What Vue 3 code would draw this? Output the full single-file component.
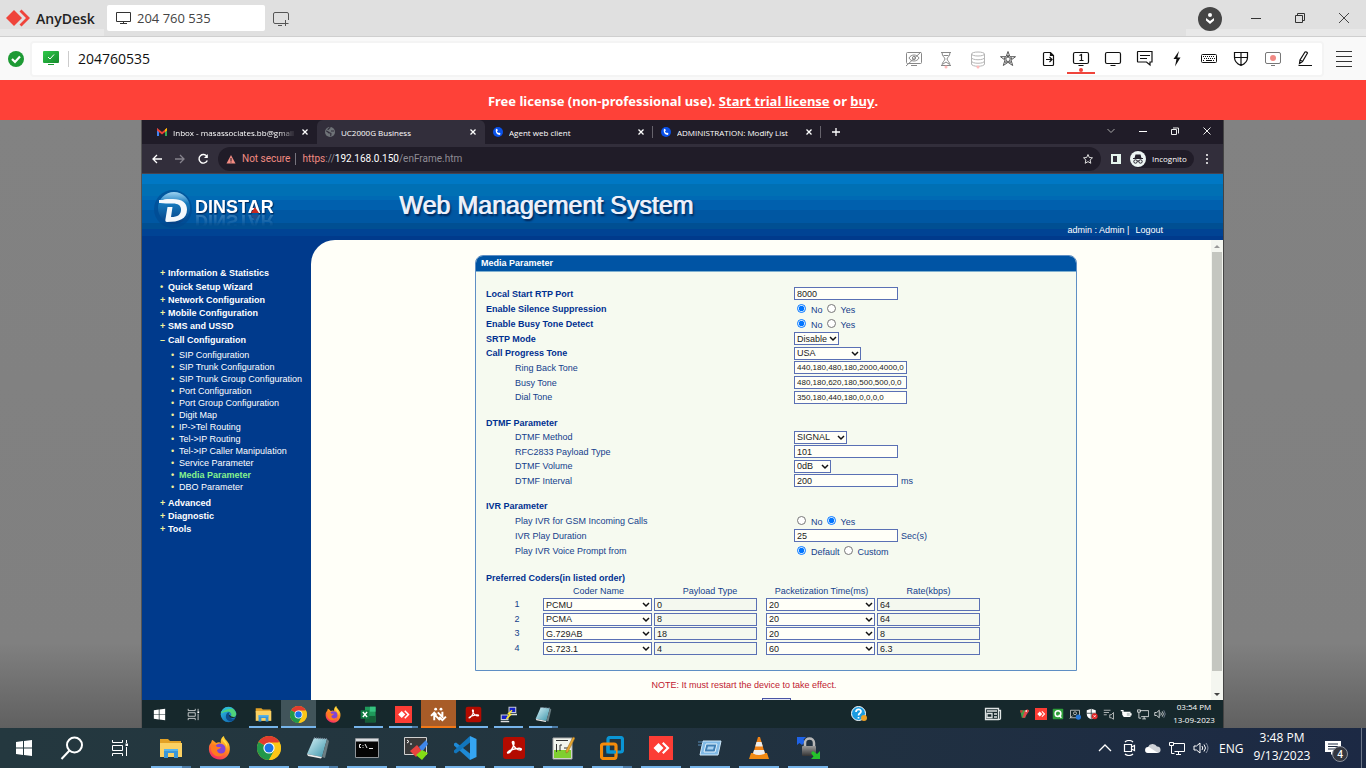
<script setup>
import { reactive } from 'vue'

const sessionTools = [
  { id: 'privacy', label: 'Privacy mode', dim: true },
  { id: 'hourglass', label: 'Waiting', dim: true },
  { id: 'stack', label: 'Storage', faint: true },
  { id: 'star', label: 'Favorites', soft: true }
]
const remoteTools = [
  { id: 'file', label: 'File transfer' },
  { id: 'monitor1', label: 'Monitor 1', active: true },
  { id: 'screen', label: 'Display' },
  { id: 'chat', label: 'Chat' },
  { id: 'bolt', label: 'Actions' },
  { id: 'keyboard', label: 'Keyboard' },
  { id: 'shield', label: 'Permissions' },
  { id: 'record', label: 'Record session' },
  { id: 'pen', label: 'Whiteboard' }
]

const tabs = [
  { id: 'gmail', title: 'Inbox - masassociates.bb@gmail' },
  { id: 'globe', title: 'UC2000G Business', active: true },
  { id: 'phone', title: 'Agent web client' },
  { id: 'phone', title: 'ADMINISTRATION: Modify List' }
]

const menu = [
  { title: 'Information & Statistics', mark: '+' },
  { title: 'Quick Setup Wizard', mark: '•' },
  { title: 'Network Configuration', mark: '+' },
  { title: 'Mobile Configuration', mark: '+' },
  { title: 'SMS and USSD', mark: '+' },
  {
    title: 'Call Configuration',
    mark: '–',
    items: [
      'SIP Configuration', 'SIP Trunk Configuration', 'SIP Trunk Group Configuration',
      'Port Configuration', 'Port Group Configuration', 'Digit Map', 'IP->Tel Routing',
      'Tel->IP Routing', 'Tel->IP Caller Manipulation', 'Service Parameter',
      'Media Parameter', 'DBO Parameter'
    ]
  },
  { title: 'Advanced', mark: '+' },
  { title: 'Diagnostic', mark: '+' },
  { title: 'Tools', mark: '+' }
]

const groups = reactive([
  {
    key: 'general',
    rows: [
      { id: 'rtp', label: 'Local Start RTP Port', type: 'text', value: '8000', main: true },
      { id: 'silence', label: 'Enable Silence Suppression', type: 'radio', value: 'No', options: ['No', 'Yes'], main: true },
      { id: 'busydetect', label: 'Enable Busy Tone Detect', type: 'radio', value: 'No', options: ['No', 'Yes'], main: true },
      { id: 'srtp', label: 'SRTP Mode', type: 'select', value: 'Disable', size: 's45', main: true },
      { id: 'cpt', label: 'Call Progress Tone', type: 'select', value: 'USA', size: 's67', main: true, tight: true },
      { id: 'ring', label: 'Ring Back Tone', type: 'text', value: '440,180,480,180,2000,4000,0,0', wide: true },
      { id: 'busy', label: 'Busy Tone', type: 'text', value: '480,180,620,180,500,500,0,0', wide: true },
      { id: 'dial', label: 'Dial Tone', type: 'text', value: '350,180,440,180,0,0,0,0', wide: true, tight: true }
    ]
  },
  {
    key: 'dtmf',
    title: 'DTMF Parameter',
    rows: [
      { id: 'method', label: 'DTMF Method', type: 'select', value: 'SIGNAL', size: 's53', tight: true },
      { id: 'rfc', label: 'RFC2833 Payload Type', type: 'text', value: '101' },
      { id: 'volume', label: 'DTMF Volume', type: 'select', value: '0dB', size: 's37', tight: true },
      { id: 'interval', label: 'DTMF Interval', type: 'text', value: '200', unit: 'ms' }
    ]
  },
  {
    key: 'ivr',
    title: 'IVR Parameter',
    rows: [
      { id: 'ivrgsm', label: 'Play IVR for GSM Incoming Calls', type: 'radio', value: 'Yes', options: ['No', 'Yes'] },
      { id: 'ivrdur', label: 'IVR Play Duration', type: 'text', value: '25', unit: 'Sec(s)' },
      { id: 'ivrvoice', label: 'Play IVR Voice Prompt from', type: 'radio', value: 'Default', options: ['Default', 'Custom'] }
    ]
  }
])

const coders = reactive([
  { name: 'PCMU', payload: '0', time: '20', rate: '64' },
  { name: 'PCMA', payload: '8', time: '20', rate: '64' },
  { name: 'G.729AB', payload: '18', time: '20', rate: '8' },
  { name: 'G.723.1', payload: '4', time: '60', rate: '6.3' }
])

const remoteApps = [
  { id: 'windows', label: 'Start', start: true },
  { id: 'taskview', label: 'Task View' },
  { id: 'edge', label: 'Edge' },
  { id: 'folder', label: 'File Explorer', open: true },
  { id: 'chrome', label: 'Chrome', open: true, current: true },
  { id: 'firefox', label: 'Firefox' },
  { id: 'excel', label: 'Excel', open: true },
  { id: 'anydesk', label: 'AnyDesk', open: true, multi: true },
  { id: 'transfer', label: 'Transfer', alert: true },
  { id: 'acrobat', label: 'Acrobat', open: true },
  { id: 'putty', label: 'PuTTY', open: true },
  { id: 'notepad', label: 'Notepad', open: true, multi: true }
]
const remoteTray = ['parrot', 'anydesk', 'qtray', 'device', 'defender', 'speech', 'battery', 'network', 'volume']

const systemApps = [
  { id: 'windows', label: 'Start' },
  { id: 'search', label: 'Search' },
  { id: 'taskview', label: 'Task View' }
]
const localApps = [
  { id: 'folder', label: 'File Explorer', multi: true },
  { id: 'firefox', label: 'Firefox' },
  { id: 'chrome', label: 'Chrome' },
  { id: 'notepad', label: 'Notepad', multi: true },
  { id: 'cmd', label: 'Command Prompt' },
  { id: 'moba', label: 'MobaXterm' },
  { id: 'vscode', label: 'VS Code' },
  { id: 'acrobat', label: 'Acrobat' },
  { id: 'notepadpp', label: 'Notepad++' },
  { id: 'vmware', label: 'VMware', multi: true },
  { id: 'anydesk', label: 'AnyDesk' },
  { id: 'run', label: 'Run' },
  { id: 'vlc', label: 'VLC' },
  { id: 'winscp', label: 'WinSCP' }
]
const localTray = ['chevup', 'meet', 'cloud', 'network', 'volume']
</script>

<template>
  <div class="desktop">
    <svg class="sprite" aria-hidden="true">
      <defs>
        <linearGradient id="gEdge" x1="0" y1="0" x2="1" y2="1">
          <stop offset="0" stop-color="#2fc0e8" /><stop offset="1" stop-color="#0c59a4" />
        </linearGradient>
        <linearGradient id="gFire" x1="0.8" y1="0" x2="0.3" y2="1">
          <stop offset="0" stop-color="#ffe03a" /><stop offset="0.5" stop-color="#ff8a1e" /><stop offset="1" stop-color="#f5256a" />
        </linearGradient>
        <linearGradient id="gNote" x1="0" y1="0" x2="1" y2="1">
          <stop offset="0" stop-color="#d6f2f8" /><stop offset="1" stop-color="#3a93a8" />
        </linearGradient>
        <linearGradient id="gLock" x1="0" y1="0" x2="0" y2="1">
          <stop offset="0" stop-color="#9a9a9a" /><stop offset="1" stop-color="#333" />
        </linearGradient>
        <linearGradient id="gBall" x1="0" y1="0" x2="0" y2="1">
          <stop offset="0" stop-color="#9fd4f2" /><stop offset="0.35" stop-color="#1579bd" /><stop offset="1" stop-color="#053f83" />
        </linearGradient>
        <linearGradient id="gOk" x1="0" y1="0" x2="1" y2="1">
          <stop offset="0" stop-color="#2fc94a" /><stop offset="1" stop-color="#158a2c" />
        </linearGradient>
      </defs>

      <symbol id="privacy" viewBox="0 0 20 20"><g fill="none" stroke="currentColor"><rect x="2.5" y="3.5" width="15" height="11" rx="1" /><path d="M7 16.5h6M2 17 17 3M5 9c2-4 8-4 10 0-2 4-8 4-10 0z" /><circle cx="10" cy="9" r="1.6" /></g></symbol>
      <symbol id="hourglass" viewBox="0 0 20 20"><g fill="none" stroke="currentColor"><path d="M5 3.500h10M5 16.500h10M6 3.500c0 4 3 5 3 6.500s-3 3-3 6.500M14 3.500c0 4-3 5-3 6.500s3 3 3 6.500M7.500 6.500h5M7 15l3-2 3 2" /></g><circle cx="10" cy="18" r="1.5" fill="#fbb" /></symbol>
      <symbol id="stack" viewBox="0 0 20 20"><g fill="none" stroke="currentColor"><ellipse cx="10" cy="5" rx="6.500" ry="2" /><path d="M3.500 5v10c0 3 13 3 13 0V5M3.500 8.500c0 3 13 3 13 0M3.500 12c0 3 13 3 13 0" /></g><circle cx="10" cy="18" r="1.500" fill="#fbb" /></symbol>
      <symbol id="star" viewBox="0 0 20 20"><path d="m10 2.500 1.900 5.200h5.600l-4.500 3.400 1.700 5.400L10 13.300l-4.700 3.200 1.700-5.400-4.500-3.400h5.600zM10 6l1 3h3l-2.500 1.800.9 2.900L10 12l-2.400 1.700.9-2.900L6 9h3z" fill="none" stroke="currentColor" /></symbol>
      <symbol id="file" viewBox="0 0 20 20"><path d="M5.500 3.500h6l3 3v9q0 1-1 1h-8q-1 0-1-1v-11q0-1 1-1zM11.500 3.500v3h3M7 10.500h6M10.500 8l2.500 2.500-2.500 2.500" fill="none" stroke="currentColor" stroke-width="1.200" /></symbol>
      <symbol id="monitor1" viewBox="0 0 20 20"><path d="M4 3.500h12q1.500 0 1.500 1.500v8q0 1.500-1.500 1.500H4q-1.500 0-1.500-1.500V5q0-1.500 1.500-1.500zM7.500 16.500h5M8.500 6.500l2-1v6M8.500 11.500h4" fill="none" stroke="currentColor" stroke-width="1.200" /></symbol>
      <symbol id="screen" viewBox="0 0 20 20"><path d="M4 3.500h12q1.500 0 1.500 1.500v8q0 1.500-1.500 1.500H4q-1.500 0-1.500-1.500V5q0-1.500 1.500-1.500zM7.500 16.500h5" fill="none" stroke="currentColor" stroke-width="1.200" /></symbol>
      <symbol id="chat" viewBox="0 0 20 20"><path d="M3 2.500h14v10.500h-2v3l-3.500-3H3q-.5 0-.5-.5V3q0-.5.500-.5zM5 6.500h10M5 9.500h7" fill="none" stroke="currentColor" stroke-width="1.200" /></symbol>
      <symbol id="bolt" viewBox="0 0 20 20"><path d="M12 2 6.500 10h3L8 17.500 13.500 8.500h-3.200z" fill="currentColor" /></symbol>
      <symbol id="keyboard" viewBox="0 0 20 20"><rect x="2.500" y="5.500" width="15" height="8" rx="1" fill="none" stroke="currentColor" /><path d="M4 7.500h12M5 9.500h11M4 11.500h2M14 11.500h2" stroke="currentColor" stroke-dasharray="1 1" /><path d="M7 11.500h6" stroke="currentColor" /></symbol>
      <symbol id="shield" viewBox="0 0 20 20"><path d="M10 3.500H3.500v5c0 4 3 6.500 6.500 8 3.500-1.500 6.500-4 6.500-8v-5zM10 3.500v13M3.500 8.500h13" fill="none" stroke="currentColor" stroke-width="1.200" /></symbol>
      <symbol id="record" viewBox="0 0 20 20"><g fill="none" stroke="#777"><rect x="2.500" y="3.500" width="15" height="11" rx="1.500" /><path d="M8 16.500h4" /></g><circle cx="10" cy="9" r="3" fill="#f28a85" /></symbol>
      <symbol id="pen" viewBox="0 0 20 20"><path d="M4.500 14.500 5 11l5-8q2-.5 2.500 1l-5 8.500zM5 11l2.500 1.500M3.500 16.500h13.500" fill="none" stroke="currentColor" stroke-width="1.200" /></symbol>

      <symbol id="gmail" viewBox="0 0 12 12"><path d="M1 2v8h2V5z" fill="#4285f4" /><path d="M11 2v8H9V5z" fill="#34a853" /><path d="m1 2 5 4 5-4v2.500L6 8.500 1 4.500z" fill="#ea4335" /><path d="M9 3.500 11 2v2.500L9 6z" fill="#fbbc04" /></symbol>
      <symbol id="globe" viewBox="0 0 12 12"><circle cx="6" cy="6" r="5" fill="#6f7378" /><path d="M2 5c2 0 2 2 4 2s0 2 1 3M6 1c0 2-2 1-2 3M7 5h3" stroke="#322e3b" fill="none" stroke-width="1.200" /></symbol>
      <symbol id="phone" viewBox="0 0 12 12"><circle cx="6" cy="6" r="5" fill="#0a52ea" /><path d="M4 3c-1 3 1 6 4 6l.500-1.500-1.500-1-.700.500C5.500 6.500 5 5.500 5 5l1-.500L5 2.800z" fill="#fff" /></symbol>

      <symbol id="windows" viewBox="0 0 24 24"><path d="M4 6l7-1v6.500H4zM12 4.900 20 4v7.500h-8zM4 12.500h7V19l-7-1zM12 12.500h8V20l-8-.9z" fill="#fff" /></symbol>
      <symbol id="search" viewBox="0 0 24 24"><g fill="none" stroke="#fff" stroke-width="2"><circle cx="14.500" cy="9" r="7.500" /><path d="m9.500 14.500-8 8.500" /></g></symbol>
      <symbol id="taskview" viewBox="0 0 24 24"><g fill="none" stroke="#fff"><path d="M4.500 4v2.500h10V4M4.500 20v-2.500h10V20M4.500 9.500h10v5h-10zM18.500 4v3M18.500 11v9" /></g><path d="M17.500 7.500h2.500v2.500h-2.500z" fill="#fff" /></symbol>
      <symbol id="edge" viewBox="0 0 24 24"><circle cx="12" cy="12" r="11" fill="url(#gEdge)" /><path d="M1.500 10C4 0 20-1 23 11c0 5-5 6-8 4 3-4-1-8-5-7C5 8 2 11 1.500 10z" fill="#4fd37a" /><path d="M1.500 10C4 1 13-1 18 4 12 4 4 6 1.500 10z" fill="#2cb9d6" /><path d="M15 15c-3-1-3-5-1-6-4-1-7 4-5 9 3 5 9 4 12 0-2 1-5 1-6-3z" fill="#0d4d8c" /><path d="M12.500 12c0 4 4 6 9 4l2-3c-1 3-5 3-8 1.500z" fill="#17262b" /></symbol>
      <symbol id="folder" viewBox="0 0 24 24"><path d="M1 3h8l2 2h11v4H1z" fill="#e3a226" /><path d="M1 7h22v14H1z" fill="#fbd163" /><path d="M5 22v-9h14v9h-4v-5H9v5z" fill="#3a97d8" /><path d="M5 13h14v2H5z" fill="#58b4ea" /></symbol>
      <symbol id="chrome" viewBox="0 0 24 24"><circle cx="12" cy="12" r="12" fill="#fbc617" /><path d="M12 12 1.600 6A12 12 0 0 1 22.400 6z" fill="#e23c2e" /><path d="M12 12 1.600 6A12 12 0 0 0 12 24l5-9z" fill="#22984a" /><path d="M12 6.500h10.600A12 12 0 0 1 12 24l5-9z" fill="#fbc617" /><circle cx="12" cy="12" r="5.600" fill="#fff" /><circle cx="12" cy="12" r="4.500" fill="#1a73e8" /></symbol>
      <symbol id="firefox" viewBox="0 0 24 24"><path d="M4 4c1 0 3 2 4 3 2-1 4-1 5 0-1-3 1-6 3-7 0 3 3 4 5 8 3 8-2 15.500-9 15.500S0 18 1 11c0-2 1-3 2-4z" fill="url(#gFire)" /><circle cx="12" cy="13" r="5.500" fill="#8245d6" /><path d="M3 9c3-1 5 0 6 2h4c-1 2-3 2-4 3 0 3 4 5 8 2-2 6-12 6-14-2z" fill="#ff7a20" /><path d="M14 2c0 4 5 5 5 11 1-5-1-8-5-11z" fill="#ffe14a" /></symbol>
      <symbol id="excel" viewBox="0 0 24 24"><path d="M7 1h15v22H7z" fill="#1f9a5b" /><path d="M14 1h8v7h-8z" fill="#36c481" /><path d="M7 14h15v9H7z" fill="#155f38" /><path d="M1 6h12v12H1z" fill="#0f7a41" /><path d="m4 8.500 6 7m0-7-6 7" stroke="#fff" stroke-width="2" /></symbol>
      <symbol id="anydesk" viewBox="0 0 24 24"><path d="M0 0h24v24H0z" fill="#fc3d35" /><path d="m9.500 7 5 5-5 5-5-5zM13 7.500 14.500 6l6 6-6 6-1.500-1.500 4.500-4.500z" fill="#fff" /></symbol>
      <symbol id="transfer" viewBox="0 0 24 24"><g fill="none" stroke="#fff" stroke-width="2.800"><path d="M6 20v-8.500l8 8.500M1.500 14 6 9.500l3 3M11 9l6.500 6.500V8M13 15.500l4.500 4.500 5-5" /></g><circle cx="8" cy="4.500" r="2" fill="#fff" /><circle cx="15.500" cy="4.500" r="2" fill="#fff" /></symbol>
      <symbol id="acrobat" viewBox="0 0 24 24"><rect x="1" y="1" width="22" height="22" rx="3" fill="#b30b00" /><path d="M6 17c2 0 6-6 6-10 0-2-2-2-1.500 0 .5 4 5 7 8 7 2-1 0-2-3-1.500-4 .5-8 2-9.500 3.500-1 1 0 1 0 1z" fill="none" stroke="#fff" stroke-width="1.500" /></symbol>
      <symbol id="putty" viewBox="0 0 24 24"><path d="M12 1h11v9H12zM1 12h11v8H1z" fill="#c9ccd4" /><path d="M13.500 2.500h8v6h-8zM2.500 13.500h8v5h-8z" fill="#1420c8" /><path d="M13 11h11v2H13zM1 21h12v2H1z" fill="#ddd" /><path d="m17 6-5 5 3 1-6 6" fill="none" stroke="#ffe92e" stroke-width="2" /></symbol>
      <symbol id="notepad" viewBox="0 0 24 24"><path d="m8 2 13 1-5 18-15-3z" fill="url(#gNote)" /><path d="m21 3 2 2-4 17-3-1z" fill="#6b7d82" /><path d="m1 18 15 3-1 1.500L2 20z" fill="#eee" /><path d="m8 2 13 1" stroke="#789" stroke-width="1.500" stroke-dasharray="1 1" /></symbol>
      <symbol id="cmd" viewBox="0 0 24 24"><path d="M.5 2.500h23v19H.5z" fill="#050505" stroke="#8f9499" /><path d="M1 3h22v2.500H1z" fill="#d9dde0" /><path d="M6 8.500H4.500v3H6M8 9v.800M8 11v.800M10 8l2 4M14 12.500h4" fill="none" stroke="#eee" /></symbol>
      <symbol id="moba" viewBox="0 0 24 24"><path d="M.5 1.500h22v17H.5z" fill="#3a3a3a" stroke="#d0d0d0" /><path d="m3 4 2 1.500L3 7M6 8h2" stroke="#fff" fill="none" /><path d="m6 15 7-6 5 6-6 6z" fill="#e8423f" /><path d="m15 11 7-7 2 4-6 8z" fill="#3f86ea" /><path d="m12 19 6-5 6 3-6 7z" fill="#84dd15" /></symbol>
      <symbol id="vscode" viewBox="0 0 24 24"><path d="M17 17.500 3 6.500 1 7.500v2L17 24z" fill="#1e8ad6" /><path d="M17 6.500 3 17.500l-2-1v-2L17 0z" fill="#1276bd" /><path d="m17 0 6.500 3v18L17 24z" fill="#35a5f2" /></symbol>
      <symbol id="notepadpp" viewBox="0 0 24 24"><path d="M2 2h19v21H2z" fill="#f3f6ee" stroke="#aaa" /><path d="M3 14h17v8H3z" fill="#7fcf2f" /><path d="M5.500 8v8M9 9h2M13 12h4M9 9v6M5 4.500h12" stroke="#333" /><path d="m22 1 2 1-7 14-2 1v-2.500z" fill="#e9a832" stroke="#8b6425" stroke-width=".5" /></symbol>
      <symbol id="vmware" viewBox="0 0 24 24"><rect x="8" y="1.500" width="14.500" height="14.500" rx="2" fill="none" stroke="#0a95d4" stroke-width="3.200" /><rect x="1.500" y="8" width="14.500" height="14.500" rx="2" fill="none" stroke="#f58b0a" stroke-width="3.200" /><path d="M8 10v6h8" fill="none" stroke="#0a95d4" stroke-width="3.200" /></symbol>
      <symbol id="run" viewBox="0 0 24 24"><path d="M5 5h18l-3 14H2z" fill="#7fb9e6" stroke="#cfe8fa" /><path d="M8 8h11l-2 8H6z" fill="#3f7fb5" stroke="#e2f2fc" /><path d="M10 10.500h6l-1 3H9z" fill="#a8d2f2" /><path d="M0 6h5M0 9h4" stroke="#5a8db8" /></symbol>
      <symbol id="vlc" viewBox="0 0 24 24"><path d="M4 17h16l2 6H2z" fill="#f08a12" /><path d="M11 1h2l5 17q-6 4-12 0z" fill="#f28316" /><path d="m9.500 6 5 0 1.300 4.500H8.200zM7 14h10l1 3.500q-6 3-12 0z" fill="#eceeee" /></symbol>
      <symbol id="winscp" viewBox="0 0 24 24"><path d="M1 1h9L7.500 3.500 9 6 6 9 3.500 7 1 9z" fill="#1e62e6" /><path d="M9 11V7c0-6 9-6 9 0v4" fill="none" stroke="#b8b8b8" stroke-width="2.500" /><rect x="6" y="10" width="14" height="10" rx="1" fill="url(#gLock)" /><path d="M24 23h-9l2.500-2.500L15 17l2-2 4 3 3-3z" fill="#25c22b" /></symbol>

      <symbol id="chevup" viewBox="0 0 16 16"><path d="m2 11 6-6 6 6" fill="none" stroke="#fff" stroke-width="1.300" /></symbol>
      <symbol id="meet" viewBox="0 0 16 16"><path d="M3.500 4.500h7v7h-7zM10.500 7l3-1.500v5l-3-1.500M4 2C6 0 10 0 12 2M4 14c2 2 6 2 8 0" fill="none" stroke="#fff" stroke-width="1.200" /></symbol>
      <symbol id="cloud" viewBox="0 0 16 16"><path d="M3 13a3 3 0 0 1 0-6 5 5 0 0 1 9-.5A3.300 3.300 0 0 1 13 13z" fill="#d0d3d8" /><path d="M3 13a3 3 0 0 1 1-6l9 6z" fill="#fff" /></symbol>
      <symbol id="network" viewBox="0 0 16 16"><path d="M4.500 3.500h11v8h-10M9.500 11.500v3M7 14.500h5M.5 2.500h4v3h-4zM2.500 5.500v8h3" fill="none" stroke="#fff" /></symbol>
      <symbol id="volume" viewBox="0 0 16 16"><path d="M1 6h2.500L7 3v10l-3.500-3H1zM9 6q1.500 2 0 4M11 4.500q3 3.500 0 7" fill="none" stroke="#fff" /><path d="M13 3q4 5 0 10" fill="none" stroke="#8a93a5" /></symbol>
      <symbol id="parrot" viewBox="0 0 16 16"><path d="M3 3h7v10H5z" fill="#43a047" /><path d="M8 7c1-6 6-6 7-3l-3 4-3 5H6z" fill="#e0454a" /><path d="M3 3h3v3H3z" fill="#c33" /><path d="M10 3h2v2h-2z" fill="#fff" /></symbol>
      <symbol id="qtray" viewBox="0 0 16 16"><rect x="1" y="1" width="14" height="14" rx="1" fill="#2f9e3a" /><circle cx="8" cy="7.500" r="3.800" fill="none" stroke="#fff" stroke-width="2" /><path d="m9 9 3.500 4" stroke="#fff" stroke-width="2" /></symbol>
      <symbol id="device" viewBox="0 0 16 16"><path d="M2 3h12v10H2zM1 14l4-4" fill="none" stroke="#ddd" /><circle cx="8" cy="7" r="2" fill="none" stroke="#ddd" /><circle cx="12.500" cy="12" r="3.500" fill="#2677d9" /></symbol>
      <symbol id="defender" viewBox="0 0 16 16"><path d="M7 1 1 3v5c0 4 3 6 6 7 3-1 6-3 6-7V3z" fill="#fff" /><path d="M7 1v14M1 7h12" stroke="#1a2a2e" /><circle cx="11.500" cy="11" r="4" fill="#e02424" /><path d="m10 9.500 3 3m0-3-3 3" stroke="#fff" /></symbol>
      <symbol id="speech" viewBox="0 0 16 16"><path d="M1 3h9M1 6h7M1 9h4M9 9h2l3-3v9l-3-2H9z" fill="none" stroke="#ddd" /></symbol>
      <symbol id="battery" viewBox="0 0 16 16"><path d="M3 5h11v7H5L3 9zM14 7h1.500v3H14z" fill="#fff" /><path d="M1 3.500h3v3" stroke="#fff" fill="none" stroke-width="1.500" /><path d="M9 6.500h4v4H9z" fill="#c4cccc" /></symbol>
      <symbol id="news" viewBox="0 0 20 16"><path d="M2.500 2.500h13v11h-13zM15.500 4.500h2v8q0 1-2 1M4 5h10M4 7.500h5v4H4zM11 8h3M11 11h3" fill="none" stroke="#dfe4e4" stroke-width="1.300" /></symbol>
      <symbol id="help" viewBox="0 0 16 16"><circle cx="7.500" cy="7.500" r="7" fill="#1a9be0" stroke="#fff" /><path d="M5 6c0-3.500 5-3.500 5-.5 0 2-2.500 1.500-2.500 4M7.500 11v1.500" fill="none" stroke="#fff" stroke-width="1.700" /><circle cx="13" cy="12" r="3" fill="#eba127" /></symbol>
    </svg>

    <header class="titlebar">
      <div class="brand">
        <svg class="brand-mark" viewBox="0 0 24 18" aria-hidden="true"><path d="m8 1 8 8-8 8-8-8zM13.500 2.500 15.500.5 24 9l-8.500 8.500-2-2L20 9z" fill="#ef443b" /></svg>
        <span>AnyDesk</span>
      </div>
      <button class="session-tab">
        <svg viewBox="0 0 16 14" aria-hidden="true"><path d="M.5 1.500h14v9H.5zM7.500 10.500v2M4 12.500h7" fill="none" stroke="#333" /></svg>
        <span>204 760 535</span>
      </button>
      <button class="new-session" aria-label="New session">
        <svg viewBox="0 0 17 16" aria-hidden="true"><path d="M10 11.500H2Q.5 11.500.5 10V2Q.5.500 2 .500h12q1.500 0 1.500 1.500v6M5 13.500h4M12.500 8v6M9.500 11.500h6" fill="none" stroke="#555" /></svg>
      </button>
      <div class="window-controls">
        <svg class="avatar" viewBox="0 0 24 24" aria-hidden="true"><circle cx="12" cy="12" r="12" fill="#464646" /><circle cx="12" cy="8" r="2" fill="#fff" /><path d="m8 11 4 3 4-3v2.500L12 17l-4-3.500z" fill="#fff" /></svg>
        <button aria-label="Minimize"><svg viewBox="0 0 12 12" aria-hidden="true"><path d="M1 6.500h10" stroke="#333" /></svg></button>
        <button aria-label="Restore"><svg viewBox="0 0 12 12" aria-hidden="true"><path d="M1.500 3.500h7v7h-7zM3.500 3.500v-2h7v7h-2" fill="none" stroke="#333" /></svg></button>
        <button aria-label="Close"><svg viewBox="0 0 12 12" aria-hidden="true"><path d="m1 1 10 10M11 1 1 11" stroke="#444" /></svg></button>
      </div>
    </header>

    <div class="toolbar">
      <svg class="ok" viewBox="0 0 16 16" aria-hidden="true"><circle cx="8" cy="8" r="8" fill="#1d9a34" /><path d="m4 8 3 3 5-5.500" fill="none" stroke="#fff" stroke-width="2.200" /></svg>
      <div class="address">
        <svg class="desk-ok" viewBox="0 0 16 15" aria-hidden="true"><rect width="16" height="12" rx="1" fill="url(#gOk)" /><path d="m5 6 2 2 4-4.500" fill="none" stroke="#fff" /><path d="M5 13.500h6" stroke="#1a9a30" /></svg>
        <input class="address-input" aria-label="Remote address" value="204760535" />
        <div class="tools">
          <button v-for="t in sessionTools" :key="t.id" :aria-label="t.label" :class="{ dim: t.dim, faint: t.faint, soft: t.soft }"><svg aria-hidden="true"><use :href="'#' + t.id" /></svg></button>
        </div>
        <div class="tools remote-tools">
          <button v-for="t in remoteTools" :key="t.id" :aria-label="t.label" :class="{ active: t.active }"><svg aria-hidden="true"><use :href="'#' + t.id" /></svg></button>
        </div>
      </div>
      <button class="burger" aria-label="Menu"><svg viewBox="0 0 16 18" aria-hidden="true"><path d="M0 1.500h16M0 6.500h16M0 11.500h16M0 16.500h16" stroke="#333" /></svg></button>
    </div>

    <p class="license">Free license (non-professional use).&nbsp;<a href="#">Start trial license</a>&nbsp;or&nbsp;<a href="#">buy</a>.</p>

    <main class="stage">
      <div class="remote">
        <div class="chrome-tabs">
          <div v-for="(t, i) in tabs" :key="i" class="tab" :class="{ current: t.active, split: i > 1 }">
            <svg class="favicon" aria-hidden="true"><use :href="'#' + t.id" /></svg>
            <span class="tab-title" :class="{ fade: i === 0 }">{{ t.title }}</span>
            <button aria-label="Close tab"><svg viewBox="0 0 8 8" aria-hidden="true"><path d="m1.500 1.500 5 5m0-5-5 5" stroke="#fff" stroke-width="1.300" /></svg></button>
          </div>
          <button class="add-tab" aria-label="New tab"><svg viewBox="0 0 10 10" aria-hidden="true"><path d="M5 1v8M1 5h8" stroke="#fff" stroke-width="1.300" /></svg></button>
          <div class="chrome-controls">
            <button aria-label="Search tabs"><svg viewBox="0 0 10 10" aria-hidden="true"><path d="m1.500 3 3.500 3.500L8.500 3" fill="none" stroke="#aaa" /></svg></button>
            <button aria-label="Minimize browser"><svg viewBox="0 0 10 10" aria-hidden="true"><path d="M1 5.500h8" stroke="#fff" /></svg></button>
            <button aria-label="Restore browser"><svg viewBox="0 0 10 10" aria-hidden="true"><path d="M1.500 3.500h5v5h-5zM3 2h5.500v5.500" fill="none" stroke="#eee" /></svg></button>
            <button aria-label="Close browser"><svg viewBox="0 0 10 10" aria-hidden="true"><path d="m1.500 1.500 7 7m0-7-7 7" stroke="#eee" /></svg></button>
          </div>
        </div>

        <div class="chrome-bar">
          <button aria-label="Back"><svg viewBox="0 0 12 12" aria-hidden="true"><path d="M11 6H2M6 2 2 6l4 4" fill="none" stroke="#fff" stroke-width="1.300" /></svg></button>
          <button aria-label="Forward"><svg viewBox="0 0 12 12" aria-hidden="true"><path d="M1 6h9M6 2l4 4-4 4" fill="none" stroke="#85828c" stroke-width="1.300" /></svg></button>
          <button aria-label="Reload"><svg viewBox="0 0 12 12" aria-hidden="true"><path d="M10 3.500A4.300 4.300 0 1 0 10.300 7.500" fill="none" stroke="#fff" stroke-width="1.400" /><path d="M10.800 1v4H7z" fill="#fff" /></svg></button>
          <div class="omnibox">
            <svg class="warn" viewBox="0 0 10 10" aria-hidden="true"><path d="m5 1 4.500 8.500H.5z" fill="#f28b82" /><path d="M5 4v3M5 7.500v1" stroke="#201c28" /></svg>
            <span class="insecure">Not secure</span>
            <span class="url"><b>https</b><i>://</i><em>192.168.0.150</em><i>/enFrame.htm</i></span>
            <svg class="mark" viewBox="0 0 12 12" aria-hidden="true"><path d="m6 1.500 1.300 3 3.200.3-2.400 2.200.7 3.300L6 8.600l-2.800 1.700.7-3.300L1.500 4.800l3.200-.3z" fill="none" stroke="#ddd" /></svg>
          </div>
          <svg class="panel-icon" viewBox="0 0 10 10" aria-hidden="true"><path d="M0 0h10v10H0z" fill="#e6f5ee" /><path d="M2 2h4v6H2z" fill="#322e3b" /></svg>
          <button class="incognito">
            <svg viewBox="0 0 16 16" aria-hidden="true"><circle cx="8" cy="8" r="8" fill="#eef6f4" /><path d="m5.500 3.500 5 0 1 3.500h-7zM3 7h10v1H3z" fill="#26232e" /><g fill="none" stroke="#26232e"><circle cx="5.500" cy="10.500" r="1.700" /><circle cx="10.500" cy="10.500" r="1.700" /><path d="M7 10h2" /></g></svg>
            <span>Incognito</span>
          </button>
          <button class="dots" aria-label="Browser menu"><svg viewBox="0 0 12 12" aria-hidden="true"><g fill="#fff"><circle cx="6" cy="2" r="1" /><circle cx="6" cy="6" r="1" /><circle cx="6" cy="10" r="1" /></g></svg></button>
        </div>

        <div class="site-head">
          <div class="logo">
            <svg viewBox="0 0 40 42" aria-hidden="true"><circle cx="20" cy="21" r="19" fill="#00458c" opacity=".55" /><circle cx="21" cy="20" r="16" fill="url(#gBall)" /><path d="M7 15q2-4 7-4h6c9 0 14 4 14 10.500C34 31 26 34 14 34c-1.500 0-2-1-1.500-3l2-12h5L18 29c7 0 10-2.500 10-7.500 0-4-3-6-8-6h-7z" fill="#f4f8fc" /><path d="M6 12h5v3H6z" fill="#f4f8fc" /></svg>
            <span class="logo-name">DINST<span class="logo-a">A</span>R</span>
          </div>
          <h1>Web Management System</h1>
          <p class="account">admin : Admin |<a href="#">Logout</a></p>
        </div>

        <div class="site-body">
          <nav class="side">
            <ul>
              <li v-for="m in menu" :key="m.title">
                <a href="#"><i>{{ m.mark }}</i>{{ m.title }}</a>
                <ul v-if="m.items">
                  <li v-for="s in m.items" :key="s"><a href="#" :class="{ here: s === 'Media Parameter' }"><i>•</i>{{ s }}</a></li>
                </ul>
              </li>
            </ul>
          </nav>

          <div class="page">
            <form class="content" @submit.prevent>
              <div class="panel">
                <h2>Media Parameter</h2>
                <div class="panel-body">
                  <section v-for="g in groups" :key="g.key" :class="g.key">
                    <h3 v-if="g.title">{{ g.title }}</h3>
                    <div v-for="r in g.rows" :key="r.id" class="row" :class="{ tight: r.tight, main: r.main }">
                      <span v-if="r.type === 'radio'" :id="r.id" class="label">{{ r.label }}</span>
                      <label v-else class="label" :for="r.id">{{ r.label }}</label>
                      <div v-if="r.type === 'text'" class="control">
                        <input :id="r.id" v-model="r.value" type="text" :class="{ wide: r.wide }" /><span v-if="r.unit" class="unit">{{ r.unit }}</span>
                      </div>
                      <div v-else-if="r.type === 'select'" class="control">
                        <span class="pick" :class="r.size"><select :id="r.id"><option>{{ r.value }}</option></select><svg viewBox="0 0 8 6" aria-hidden="true"><path d="m1 1 3 3 3-3" /></svg></span>
                      </div>
                      <div v-else class="control radios" role="radiogroup" :aria-labelledby="r.id">
                        <label v-for="o in r.options" :key="o"><input v-model="r.value" type="radio" :name="r.id" :value="o" /><span>{{ o }}</span></label>
                      </div>
                    </div>
                  </section>

                  <section class="coders">
                    <h3>Preferred Coders(in listed order)</h3>
                    <table>
                      <thead>
                        <tr><th class="c-no"></th><th class="c-pick">Coder Name</th><th class="c-pay">Payload Type</th><th class="c-pick">Packetization Time(ms)</th><th class="c-rate">Rate(kbps)</th></tr>
                      </thead>
                      <tbody>
                        <tr v-for="(c, i) in coders" :key="c.name">
                          <td class="num">{{ i + 1 }}</td>
                          <td><span class="pick"><select :aria-label="'Coder ' + (i + 1)"><option>{{ c.name }}</option></select><svg viewBox="0 0 8 6" aria-hidden="true"><path d="m1 1 3 3 3-3" /></svg></span></td>
                          <td><input type="text" class="locked" readonly :value="c.payload" :aria-label="'Payload type ' + (i + 1)" /></td>
                          <td><span class="pick"><select :aria-label="'Packetization time ' + (i + 1)"><option>{{ c.time }}</option></select><svg viewBox="0 0 8 6" aria-hidden="true"><path d="m1 1 3 3 3-3" /></svg></span></td>
                          <td><input type="text" class="locked" readonly :value="c.rate" :aria-label="'Rate ' + (i + 1)" /></td>
                        </tr>
                      </tbody>
                    </table>
                  </section>
                </div>
              </div>
              <p class="note">NOTE: It must restart the device to take effect.</p>
              <button class="save" aria-label="Save"></button>
            </form>
            <div class="scrollbar">
              <svg viewBox="0 0 12 12" aria-hidden="true"><path d="m3 8 3-3 3 3z" fill="#999" /></svg>
              <div class="thumb"></div>
              <svg viewBox="0 0 12 12" aria-hidden="true"><path d="m3 5 3 3 3-3z" fill="#444" /></svg>
            </div>
          </div>
        </div>

        <div class="remote-bar">
          <button v-for="a in remoteApps" :key="a.id" class="rapp" :aria-label="a.label" :class="{ first: a.start, open: a.open, current: a.current, multi: a.multi, alert: a.alert }"><svg aria-hidden="true"><use :href="'#' + a.id" /></svg></button>
          <div class="remote-mid"><svg class="help" aria-hidden="true"><use href="#help" /></svg></div>
          <svg class="news" aria-hidden="true"><use href="#news" /></svg>
          <div class="remote-tray"><svg v-for="t in remoteTray" :key="t" aria-hidden="true"><use :href="'#' + t" /></svg></div>
          <time class="remote-clock"><span>03:54 PM</span><span>13-09-2023</span></time>
        </div>
      </div>
    </main>

    <footer class="taskbar">
      <button v-for="a in systemApps" :key="a.id" class="sys" :aria-label="a.label"><svg aria-hidden="true"><use :href="'#' + a.id" /></svg></button>
      <div class="apps">
        <button v-for="a in localApps" :key="a.id" class="app" :aria-label="a.label" :class="{ multi: a.multi }"><svg aria-hidden="true"><use :href="'#' + a.id" /></svg></button>
      </div>
      <div class="tray"><svg v-for="t in localTray" :key="t" aria-hidden="true"><use :href="'#' + t" /></svg></div>
      <span class="lang">ENG</span>
      <time class="clock"><span>3:48 PM</span><span>9/13/2023</span></time>
      <button class="notice" aria-label="Notifications">
        <svg viewBox="0 0 16 16" aria-hidden="true"><path d="M0 1h16v11h-7l-3 3v-3H0z" fill="#fff" /><path d="M3 4h10M3 6.500h10M3 9h7" stroke="#1d2b42" /></svg>
        <span class="badge">4</span>
      </button>
      <span class="peek"></span>
    </footer>
  </div>
</template>

<style>
html, body { margin: 0; height: 100%; overflow: hidden; }
</style>

<style scoped>
* { box-sizing: border-box; }
.desktop { height: 100vh; display: flex; flex-direction: column; font-family: "Open Sans", "Noto Sans", sans-serif; color: #222; overflow: hidden; }
.sprite { position: absolute; width: 0; height: 0; }
button { border: 0; padding: 0; margin: 0; background: none; font: inherit; color: inherit; display: flex; align-items: center; justify-content: center; }
p, h1, h2, h3, ul { margin: 0; padding: 0; }
ul { list-style: none; }
svg { flex: none; display: block; }

.titlebar { height: 37px; flex: none; display: flex; align-items: stretch; background: #e0e0e0; border-bottom: 1px solid #cfcfcf; }
.brand { width: 104px; display: flex; align-items: center; gap: 6px; padding-left: 6px; font-size: 14px; font-weight: 600; color: #222; box-shadow: inset 0 -7px #e8e8e8; }
.brand-mark { width: 24px; height: 18px; }
.session-tab { width: 158px; height: 26px; margin: 5px 0 0 3px; background: #fff; border-radius: 2px; justify-content: flex-start; padding-left: 9px; gap: 5px; font-size: 13px; color: #444; }
.session-tab svg { width: 16px; height: 14px; }
.new-session { margin-left: 8px; width: 17px; padding-top: 4px; }
.new-session svg { width: 17px; height: 16px; }
.window-controls { margin-left: auto; width: 180px; display: flex; box-shadow: inset 0 -7px #e8e8e8; }
.window-controls button { width: 44px; }
.window-controls svg { height: 12px; width: 12px; }
.window-controls .avatar { width: 24px; height: 24px; margin: 7px 12px 0; }

.toolbar { height: 43px; flex: none; display: flex; align-items: center; background: #f9f9f9; padding-left: 8px; }
.ok { width: 16px; height: 16px; margin-right: 8px; }
.address { flex: 1; height: 32px; background: #fff; display: flex; align-items: center; padding: 0 1px 0 11px; border-radius: 2px; box-shadow: 0 0 0 2px #f4f4f4; }
.desk-ok { width: 16px; height: 15px; margin-right: 9px; }
.address-input { flex: 1; min-width: 0; height: 16px; border: 0; border-left: 1px solid #ccc; padding: 0 0 0 9px; font: 14px "Open Sans", sans-serif; color: #111; outline: none; }
.tools { display: flex; height: 32px; color: #111; }
.tools button { width: 32px; height: 32px; }
.tools svg { width: 20px; height: 20px; }
.tools .dim { color: #888; }
.tools .faint { color: #b5b5b5; }
.tools .soft { color: #555; width: 28px; }
.remote-tools { margin-left: 11px; }
.tools .active { position: relative; }
.tools .active::before { content: ""; position: absolute; left: 14px; top: 25px; width: 4px; height: 4px; border-radius: 2px; background: #ef443b; }
.tools .active::after { content: ""; position: absolute; left: 2px; right: 2px; bottom: 1px; height: 2px; background: #ef443b; }
.burger { width: 44px; height: 32px; }
.burger svg { width: 16px; height: 18px; }

.license { height: 40px; flex: none; background: #fe4138; color: #fff; font: 700 13px "Noto Sans", sans-serif; display: flex; align-items: center; justify-content: center; padding-top: 2px; }
.license a { color: #fff; }

.stage { flex: 1; min-height: 0; display: flex; padding: 0 143px 0 142px; background: linear-gradient(#828282, #808080 86%, #606060); }
.remote { flex: 1; min-width: 0; display: flex; flex-direction: column; overflow: hidden; background: #003a8c; box-shadow: -1px 0 #555, 1px 0 #444; }

.chrome-tabs { height: 24px; flex: none; display: flex; background: #201c28; padding-left: 7px; color: #fff; font-size: 8px; }
.tab { width: 168px; display: flex; align-items: center; padding: 0 7px; border-radius: 6px 6px 0 0; position: relative; }
.tab.current { background: #322e3b; }
.tab.split::after { content: ""; position: absolute; right: 0; top: 6px; width: 1px; height: 12px; background: #66636c; }
.favicon { width: 12px; height: 12px; margin-right: 5px; }
.tab-title { flex: 1; min-width: 0; overflow: hidden; white-space: nowrap; }
.tab-title.fade { -webkit-mask-image: linear-gradient(90deg, #000 85%, transparent); mask-image: linear-gradient(90deg, #000 85%, transparent); }
.tab button { width: 10px; margin-left: 3px; }
.tab button svg { width: 8px; height: 8px; }
.add-tab { width: 30px; }
.add-tab svg { width: 10px; height: 10px; }
.chrome-controls { margin-left: auto; display: flex; }
.chrome-controls button { width: 32px; height: 22px; }
.chrome-controls svg { width: 10px; height: 10px; }

.chrome-bar { height: 30px; flex: none; display: flex; align-items: center; background: #322e3b; padding-left: 3px; border-bottom: 1px solid #47434f; color: #fff; font-size: 8px; }
.chrome-bar > button { width: 23px; }
.chrome-bar > button > svg { width: 12px; height: 12px; }
.omnibox { flex: 1; height: 24px; margin-left: 4px; border-radius: 12px; background: #201c28; display: flex; align-items: center; padding: 0 7px 0 8px; font: 10px Roboto, sans-serif; }
.warn { width: 10px; height: 10px; margin-right: 6px; }
.insecure { color: #f28b82; padding-right: 5px; border-right: 1px solid #77747e; line-height: 12px; }
.url { padding-left: 6px; color: #8f8c95; }
.url b { font-weight: 400; color: #f28b82; }
.url i, .url em { font-style: normal; }
.url em { color: #fff; }
.mark { width: 12px; height: 12px; margin-left: auto; }
.panel-icon { width: 10px; height: 10px; margin: 0 9px 0 10px; }
.chrome-bar > .incognito { width: 64px; height: 18px; border-radius: 9px; background: #201c28; justify-content: flex-start; gap: 6px; }
.chrome-bar > .incognito svg { width: 16px; height: 16px; }
.chrome-bar > .dots { width: 29px; padding-right: 3px; }

.site-head { height: 66px; flex: none; display: flex; color: #fff; font-family: "Liberation Sans", Arial, sans-serif; background: linear-gradient(#0078c4 0 10px, #0070b4 10px 22px, #006ab4 22px 26px, #0060ae 26px 36px, #0057a2 36px 49px, #004f92 49px 55px, #004394 55px 62px, #003a8c 62px); }
.logo { display: flex; align-items: center; width: 257px; padding-left: 11px; gap: 2px; }
.logo svg { width: 40px; height: 42px; margin-top: 4px; }
.logo-name { font-size: 18px; font-weight: 700; line-height: 18px; text-shadow: 1px 1px 1px #002a5c; -webkit-box-reflect: below -4px linear-gradient(transparent 20%, rgba(255, 255, 255, 0.25)); }
.logo-a { position: relative; }
.logo-a::after { content: ""; position: absolute; left: 3px; bottom: 4px; border: 4px solid transparent; border-top: 0; border-bottom: 6px solid #c8281e; }
h1 { font-size: 25px; font-weight: 400; line-height: 30px; margin-top: 16px; color: #eef1fa; text-shadow: 1px 0 #dfe3f2, 2px 2px 2px #002050; }
.account { margin: 50px 60px 0 auto; font-size: 9px; line-height: 12px; white-space: pre; }
.account a { color: #fff; text-decoration: none; margin-left: 6px; }

.site-body { flex: 1; min-height: 0; display: flex; font-family: "Liberation Sans", Arial, sans-serif; font-size: 9px; }
.side { width: 169px; flex: none; padding: 27px 0 0 18px; color: #fff; }
.side a { display: flex; color: #fff; text-decoration: none; font-weight: 700; line-height: 13px; white-space: nowrap; }
.side i { width: 8px; flex: none; font-style: normal; color: #f4f39a; }
.side > ul > li:nth-child(4n + 1) { margin-bottom: 1px; }
.side ul ul { padding: 2px 0 4px 11px; }
.side ul ul a { font-weight: 400; line-height: 12px; }
.side ul ul .here { font-weight: 700; color: #86f28c; }

.page { flex: 1; min-width: 0; display: flex; background: #fffff8; border-radius: 24px 0 0 0; overflow: hidden; }
.content { flex: 1; min-width: 0; padding: 15px 134px 0 164px; display: flex; flex-direction: column; }
.panel { flex: none; border: 1px solid #5f8fc4; border-radius: 8px 8px 0 0; background: #f6faf0; overflow: hidden; }
h2 { height: 16px; background: #0054a4; color: #fff; font-size: 9px; line-height: 14px; padding-left: 5px; border-bottom: 1px solid #7fb0d0; }
.panel-body { padding: 14px 10px; color: #14408c; }
h3 { font-size: 9px; line-height: 14px; color: #003090; }
.row { display: grid; grid-template-columns: 308px 1fr; height: 15px; align-items: center; }
.row.tight { height: 14px; }
.label { padding-left: 29px; line-height: 12px; }
.main .label { padding-left: 0; font-weight: 700; color: #003090; }
.control { display: flex; align-items: center; line-height: 12px; }
.dtmf { margin-top: 12px; }
.ivr { margin-top: 11px; }
.coders { margin-top: 13px; }
input[type="text"], select { height: 13px; border: 1px solid #5a70b4; border-radius: 0; background: #fffff8; font: 9px "Liberation Sans", Arial, sans-serif; color: #222; padding: 0 2px; margin: 0; outline: none; display: block; }
input[type="text"] { width: 104px; }
input[type="text"].wide { width: 113px; font-size: 8px; }
input[type="text"].locked { width: 103px; background: #f4f8ef; }
.unit { margin-left: 3px; }
.pick { position: relative; display: block; width: 109px; }
.pick select { width: 100%; appearance: none; padding: 0 0 0 2px; }
.pick svg { position: absolute; right: 2px; top: 4px; width: 8px; height: 6px; fill: none; stroke: #111; stroke-width: 1.5; pointer-events: none; }
.s45 { width: 45px; }
.s67 { width: 67px; }
.s53 { width: 53px; }
.s37 { width: 37px; }
.radios { padding-left: 3px; gap: 4px; }
.radios label { display: flex; align-items: center; gap: 5px; }
.radios label span { padding-top: 3px; }
.radios input { width: 9px; height: 9px; margin: 0; }
table { border-collapse: collapse; table-layout: fixed; width: 494px; }
th { font-weight: 400; padding: 0; height: 12px; line-height: 12px; }
td { padding: 0; height: 15px; line-height: 13px; }
tbody tr:nth-child(2) td { height: 14px; }
.num { text-align: center; padding-left: 5px; }
.c-no { width: 57px; }
.c-pick { width: 111px; }
.c-pay { width: 112px; }
.c-rate { width: 103px; }
.note { margin-top: 8px; text-align: center; color: #c01830; line-height: 13px; padding-right: 64px; }
.save { flex: none; align-self: center; width: 29px; height: 15px; margin-top: 6px; background: #e4e6f6; border: 1px solid #4a55a4; }
.scrollbar { width: 12px; flex: none; background: #f4f6f0; display: flex; flex-direction: column; }
.scrollbar svg { width: 12px; height: 12px; }
.thumb { flex: 1; margin: 0 1px 17px; background: #c4c6c0; }

.remote-bar { height: 28px; flex: none; display: flex; align-items: stretch; background: #16282c; color: #fff; padding-right: 4px; }
.rapp { width: 35px; position: relative; }
.rapp.first { width: 34px; }
.rapp svg { width: 17px; height: 17px; }
.rapp.open::after, .rapp.alert::after { content: ""; position: absolute; left: 3px; right: 3px; bottom: 0; height: 2px; background: #76b4ea; }
.rapp.multi::after, .app.multi::after { background: linear-gradient(90deg, #76b4ea 78%, #4c7ca8 78%); }
.rapp.current { background: #41545a; }
.rapp.alert { background: #a85c28; }
.rapp.current::after, .rapp.alert::after { left: 0; right: 0; }
.rapp.alert::after { background: #f07818; }
.remote-mid { flex: 1; display: flex; align-items: center; justify-content: flex-end; padding-right: 116px; }
.help { width: 16px; height: 16px; }
.news { width: 20px; height: 16px; align-self: center; margin-right: 15px; }
.remote-tray { display: flex; align-items: center; gap: 5px; margin-right: 3px; }
.remote-tray svg { width: 12px; height: 12px; }
.remote-clock { width: 50px; font-size: 8px; line-height: 13px; display: flex; flex-direction: column; align-items: center; white-space: nowrap; }

.taskbar { height: 40px; flex: none; display: flex; align-items: stretch; color: #fff; background: linear-gradient(90deg, #24383f, #22343f 45%, #1c2944); }
.sys { width: 48px; }
.sys svg { width: 24px; height: 24px; }
.apps { display: flex; margin-left: 2px; }
.app { width: 49px; position: relative; }
.app svg { width: 24px; height: 24px; }
.app::after { content: ""; position: absolute; left: 5px; width: 40px; bottom: 0; height: 2px; background: #76b4ea; }
.tray { margin-left: auto; display: flex; align-items: center; gap: 8px; }
.tray svg { width: 16px; height: 16px; }
.lang { align-self: center; font-size: 12px; margin-left: 10px; width: 32px; }
.clock { width: 62px; font-size: 12px; line-height: 18px; padding-top: 1px; display: flex; flex-direction: column; align-items: center; }
.notice { width: 28px; margin: 0 14px 0 6px; position: relative; }
.notice svg { width: 16px; height: 16px; }
.badge { position: absolute; left: 13px; top: 18px; width: 16px; height: 16px; border: 1px solid #8c919c; border-radius: 8px; background: #33363f; font-size: 10px; line-height: 14px; font-weight: 600; text-align: center; }
.peek { width: 1px; background: #6b7587; margin-right: 4px; }
</style>
